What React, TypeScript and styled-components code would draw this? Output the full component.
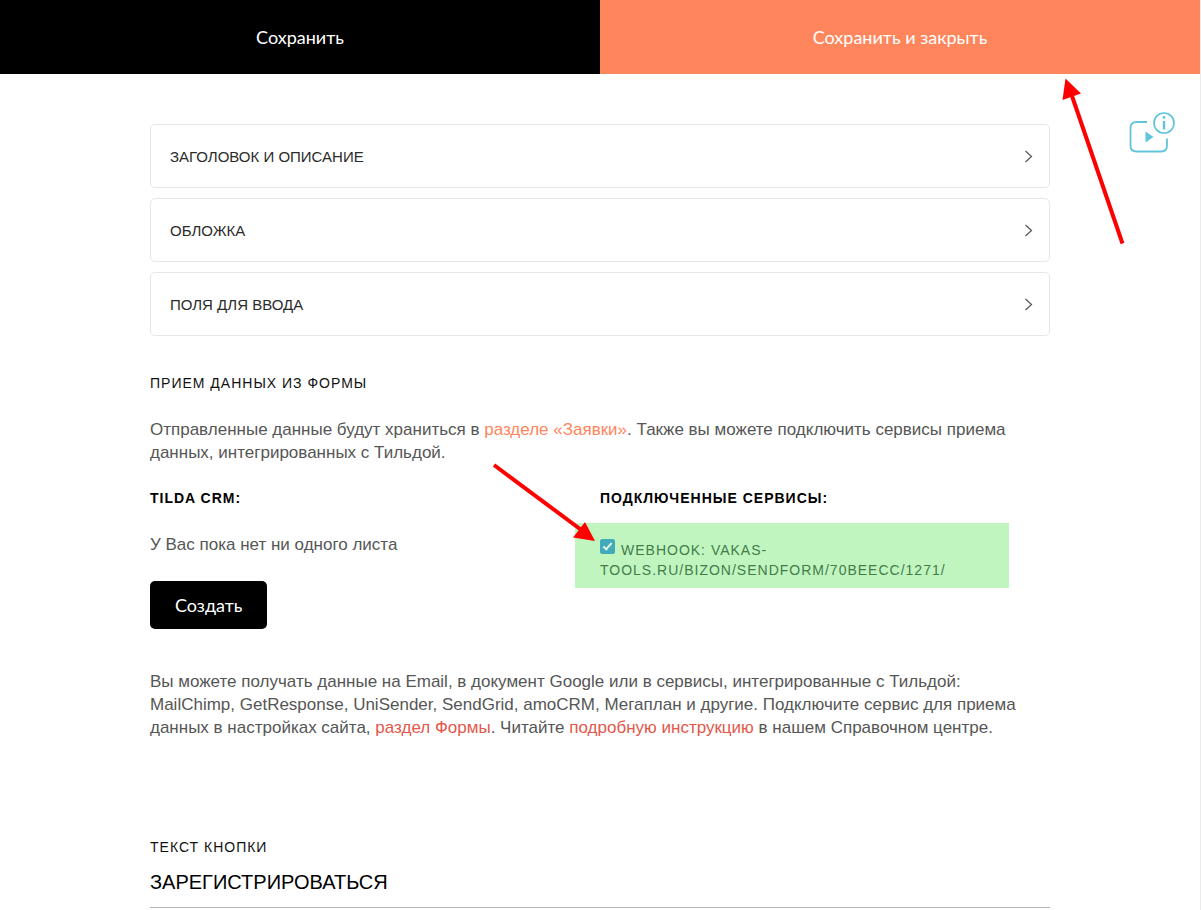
import React, { useState } from "react";
import styled, { createGlobalStyle } from "styled-components";

const GlobalStyle = createGlobalStyle`
  * { box-sizing: border-box; }
  body { margin: 0; background: #fff; }
  body, button, input { font-family: "Liberation Sans", Arial, sans-serif; }
`;

const Page = styled.div`
  position: relative;
  min-height: 100vh;
  border-right: 1px solid #ebebeb;
  overflow: hidden;
`;

const SaveBar = styled.header`
  display: grid;
  grid-template-columns: 1fr 1fr;
  height: 74px;
`;

const SaveButton = styled.button<{ $accent?: boolean }>`
  border: 0;
  padding: 0;
  color: #fff;
  background: ${(p) => (p.$accent ? "#ff855d" : "#000")};
  font-family: Lato, sans-serif;
  font-size: 18px;
  cursor: pointer;
`;

const Content = styled.main`
  max-width: 900px;
  margin: 0 auto;
  padding-top: 50px;
`;

const Panels = styled.div`
  display: grid;
  gap: 10px;
`;

const Panel = styled.button`
  display: flex;
  align-items: center;
  justify-content: space-between;
  height: 64px;
  padding: 1px 15px 0 19px;
  border: 1px solid #e8e8e8;
  border-radius: 5px;
  background: #fff;
  color: #2b2b2b;
  font-size: 15px;
  text-transform: uppercase;
  cursor: pointer;
`;

const Heading = styled.h2`
  margin: 0;
  padding-top: 37px;
  color: #111;
  font-size: 14px;
  font-weight: 400;
  line-height: 20px;
  letter-spacing: 1px;
`;

const Text = styled.p`
  margin: 0;
  color: #565656;
  font-size: 17px;
  line-height: 23px;
`;

const Intro = styled(Text)`
  padding-top: 25px;
`;

const Hint = styled(Text)`
  padding-top: 41px;
`;

const Link = styled.a<{ $strong?: boolean }>`
  color: ${(p) => (p.$strong ? "#e4574b" : "#ff855d")};
  text-decoration: none;
`;

const Columns = styled.div`
  display: grid;
  grid-template-columns: 1fr 1fr;
  padding-top: 24px;
`;

const ColumnTitle = styled.h3`
  margin: 0;
  color: #000;
  font-size: 14px;
  font-weight: 700;
  line-height: 20px;
  letter-spacing: 1px;
`;

const Sheets = styled.section`
  display: grid;
  justify-items: start;
  gap: 25px;
`;

const CreateButton = styled.button`
  height: 48px;
  padding: 0 25px;
  border: 0;
  border-radius: 5px;
  background: #000;
  color: #fff;
  font-family: Lato, sans-serif;
  font-size: 18px;
  cursor: pointer;
`;

const Services = styled.section`
  display: flex;
  flex-direction: column;
  align-items: flex-start;
  gap: 15px;
`;

const Service = styled.label`
  width: 434px;
  margin-left: -25px;
  padding: 16px 25px 8px;
  background: #c0f5c0;
  color: #437c49;
  font-size: 14px;
  line-height: 20px;
  letter-spacing: 1px;
`;

const Tick = styled.input`
  appearance: none;
  position: relative;
  width: 15px;
  height: 15px;
  margin: 0 6px 0 0;
  border: 1px solid #43aaba;
  border-radius: 2px;
  background: #c0f5c0;
  vertical-align: 1px;

  &:checked { background: #43aaba; }
  &:checked::after {
    content: "";
    position: absolute;
    left: 4px;
    top: 1px;
    width: 3px;
    height: 7px;
    border: solid #e2ffe4;
    border-width: 0 2px 2px 0;
    transform: rotate(42deg);
  }
`;

const Field = styled.label`
  display: grid;
  gap: 8px;
  padding-top: 98px;
  color: #111;
  font-size: 14px;
  line-height: 20px;
  letter-spacing: 1px;
`;

const TextInput = styled.input`
  width: 100%;
  height: 43px;
  padding: 0 0 8px;
  border: 0;
  border-bottom: 1px solid #b4b4b4;
  outline: 0;
  color: #000;
  font-size: 20px;
`;

const HelpLink = styled.a`
  position: absolute;
  top: 110px;
  right: 23px;
`;

const Arrow = styled.svg<{ $x: number; $y: number }>`
  position: absolute;
  left: calc(50% + ${(p) => p.$x}px);
  top: ${(p) => p.$y}px;
  pointer-events: none;
`;

const Chevron = () => (
  <svg width="10" height="14" viewBox="0 0 10 14" fill="none" stroke="#555" strokeWidth="1.2" aria-hidden="true">
    <path d="M1.5 1 7.500 6.500l-6 5.500" />
  </svg>
);

const panels = ["Заголовок и описание", "Обложка", "Поля для ввода"];

export default function App() {
  const [webhook, setWebhook] = useState(true);
  const [label, setLabel] = useState("ЗАРЕГИСТРИРОВАТЬСЯ");

  return (
    <Page>
      <GlobalStyle />
      <SaveBar>
        <SaveButton type="button">Сохранить</SaveButton>
        <SaveButton type="button" $accent>Сохранить и закрыть</SaveButton>
      </SaveBar>

      <HelpLink href="#help" aria-label="Видеоинструкция">
        <svg width="50" height="46" viewBox="0 0 50 46" fill="none" display="block">
          <path
            d="M20 12H9.500Q3.500 12 3.500 18V35.500Q3.500 41.500 9.500 41.500H34Q40 41.500 40 35.500V28.500"
            stroke="#60c5dc" strokeWidth="1.800"
          />
          <path d="M18.500 21.500V32.500L26.500 27Z" fill="#60c5dc" />
          <circle cx="37" cy="13" r="10" stroke="#60c5dc" strokeWidth="1.700" />
          <path d="M37 11V19.500" stroke="#60c5dc" strokeWidth="2.400" />
          <circle cx="37" cy="7.500" r="1.400" fill="#60c5dc" />
        </svg>
      </HelpLink>

      <Content>
        <Panels>
          {panels.map((title) => (
            <Panel type="button" key={title}>
              {title}
              <Chevron />
            </Panel>
          ))}
        </Panels>

        <Heading>ПРИЕМ ДАННЫХ ИЗ ФОРМЫ</Heading>
        <Intro>
          Отправленные данные будут храниться в <Link href="#leads">разделе «Заявки»</Link>. Также вы можете
          подключить сервисы приема данных, интегрированных с Тильдой.
        </Intro>

        <Columns>
          <Sheets>
            <ColumnTitle>TILDA CRM:</ColumnTitle>
            <Text>У Вас пока нет ни одного листа</Text>
            <CreateButton type="button">Создать</CreateButton>
          </Sheets>
          <Services>
            <ColumnTitle>ПОДКЛЮЧЕННЫЕ СЕРВИСЫ:</ColumnTitle>
            <Service>
              <Tick type="checkbox" checked={webhook} onChange={(e) => setWebhook(e.target.checked)} />
              WEBHOOK: VAKAS-TOOLS.RU/BIZON/SENDFORM/70BEECC/1271/
            </Service>
          </Services>
        </Columns>

        <Hint>
          Вы можете получать данные на Email, в документ Google или в сервисы, интегрированные с Тильдой:
          MailChimp, GetResponse, UniSender, SendGrid, amoCRM, Мегаплан и другие. Подключите сервис для приема
          данных в настройках сайта, <Link $strong href="#forms">раздел Формы</Link>. Читайте{" "}
          <Link $strong href="#guide">подробную инструкцию</Link> в нашем Справочном центре.
        </Hint>

        <Field>
          ТЕКСТ КНОПКИ
          <TextInput type="text" value={label} onChange={(e) => setLabel(e.target.value)} />
        </Field>
      </Content>

      <Arrow $x={460} $y={76} width="66" height="170" viewBox="0 0 66 170" aria-hidden="true">
        <path d="M62.500 167.500 12 20" stroke="#f00" strokeWidth="4" />
        <path d="M5.500 2.500 21 17.500 2.500 24Z" fill="#f00" />
      </Arrow>
      <Arrow $x={-110} $y={460} width="110" height="86" viewBox="0 0 110 86" aria-hidden="true">
        <path d="M4 5 90 69" stroke="#f00" strokeWidth="4" />
        <path d="M105 81 83 77.500 95 62Z" fill="#f00" />
      </Arrow>
    </Page>
  );
}
